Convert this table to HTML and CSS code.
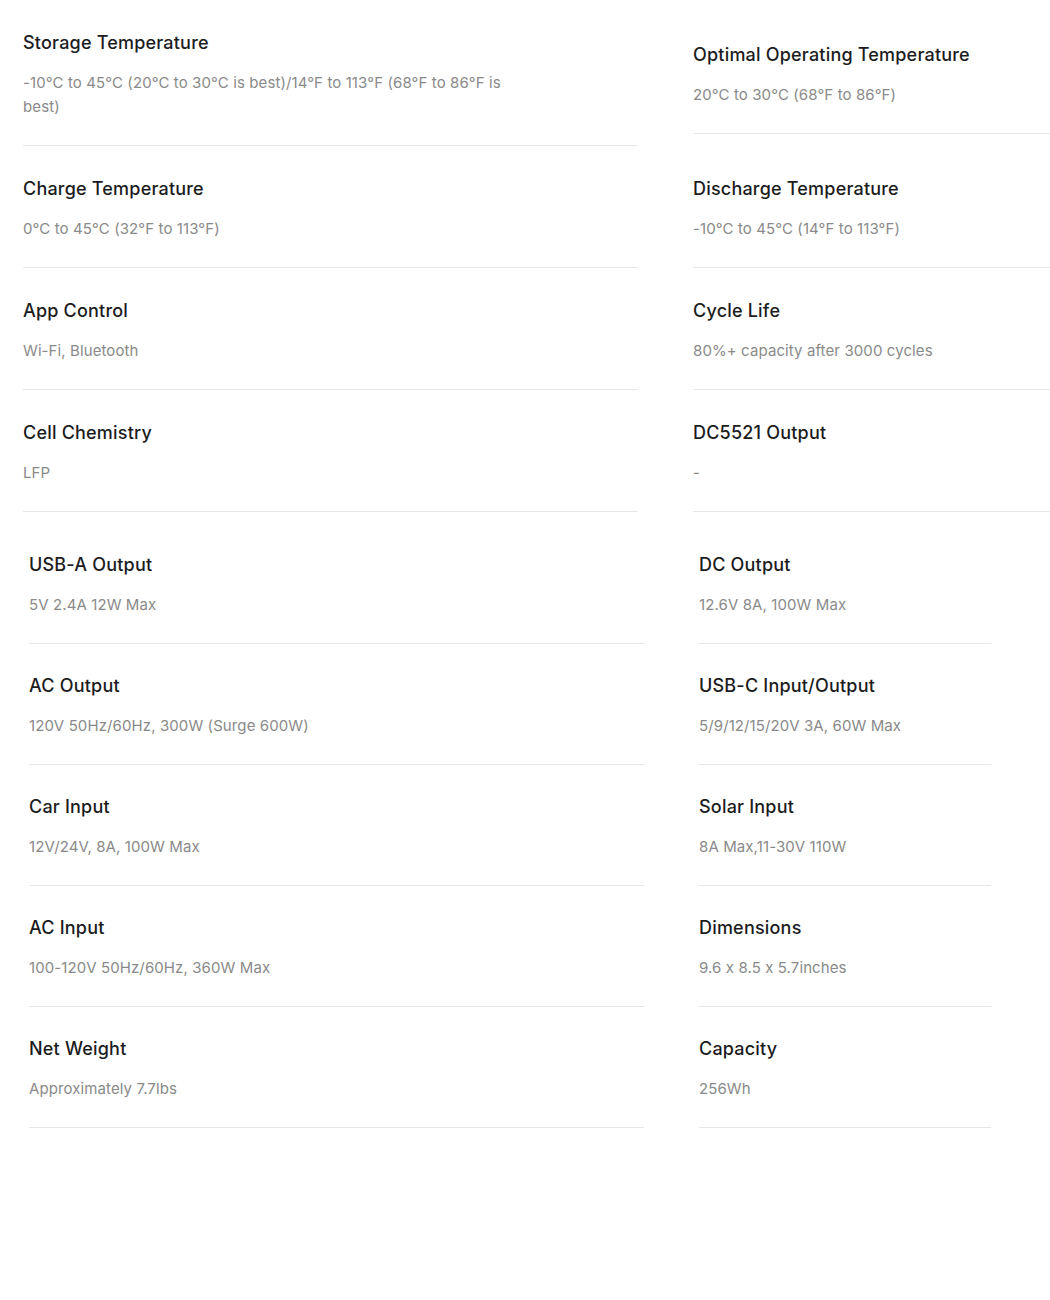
FILE: index.html
```html
<!DOCTYPE html>
<html lang="en">
<head>
<meta charset="utf-8">
<title>Specifications</title>
<link rel="stylesheet" href="styles.css">
</head>
<body>
<div class="page">
  <section class="specs specs-top">
    <div class="spec"><h3 class="spec-title">Storage Temperature</h3><p class="spec-value">-10°C to 45°C (20°C to 30°C is best)/14°F to 113°F (68°F to 86°F is best)</p></div>
    <div class="spec"><h3 class="spec-title">Optimal Operating Temperature</h3><p class="spec-value">20°C to 30°C (68°F to 86°F)</p></div>
    <div class="spec"><h3 class="spec-title">Charge Temperature</h3><p class="spec-value">0°C to 45°C (32°F to 113°F)</p></div>
    <div class="spec"><h3 class="spec-title">Discharge Temperature</h3><p class="spec-value">-10°C to 45°C (14°F to 113°F)</p></div>
    <div class="spec"><h3 class="spec-title">App Control</h3><p class="spec-value">Wi-Fi, Bluetooth</p></div>
    <div class="spec"><h3 class="spec-title">Cycle Life</h3><p class="spec-value">80%+ capacity after 3000 cycles</p></div>
    <div class="spec"><h3 class="spec-title">Cell Chemistry</h3><p class="spec-value">LFP</p></div>
    <div class="spec"><h3 class="spec-title">DC5521 Output</h3><p class="spec-value">-</p></div>
  </section>
  <section class="specs specs-bottom">
    <div class="spec"><h3 class="spec-title">USB-A Output</h3><p class="spec-value">5V 2.4A 12W Max</p></div>
    <div class="spec"><h3 class="spec-title">DC Output</h3><p class="spec-value">12.6V 8A, 100W Max</p></div>
    <div class="spec"><h3 class="spec-title">AC Output</h3><p class="spec-value">120V 50Hz/60Hz, 300W (Surge 600W)</p></div>
    <div class="spec"><h3 class="spec-title">USB-C Input/Output</h3><p class="spec-value">5/9/12/15/20V 3A, 60W Max</p></div>
    <div class="spec"><h3 class="spec-title">Car Input</h3><p class="spec-value">12V/24V, 8A, 100W Max</p></div>
    <div class="spec"><h3 class="spec-title">Solar Input</h3><p class="spec-value">8A Max,11-30V 110W</p></div>
    <div class="spec"><h3 class="spec-title">AC Input</h3><p class="spec-value">100-120V 50Hz/60Hz, 360W Max</p></div>
    <div class="spec"><h3 class="spec-title">Dimensions</h3><p class="spec-value">9.6 x 8.5 x 5.7inches</p></div>
    <div class="spec"><h3 class="spec-title">Net Weight</h3><p class="spec-value">Approximately 7.7lbs</p></div>
    <div class="spec"><h3 class="spec-title">Capacity</h3><p class="spec-value">256Wh</p></div>
  </section>
</div>
</body>
</html>
```

FILE: styles.css
```css
html, body {
  margin: 0;
  padding: 0;
  background: #ffffff;
  overflow: hidden;
}

body {
  font-family: Inter, "Noto Sans", "Liberation Sans", sans-serif;
  width: 1050px;
  height: 1300px;
}

.page {
  padding-top: 30px;
}

.specs {
  display: grid;
  align-items: center;
  column-gap: 55px;
}

.specs-top {
  margin-left: 23px;
  grid-template-columns: 615px 1fr;
  row-gap: 30px;
}

.specs-bottom {
  margin-left: 29px;
  margin-top: 40px;
  grid-template-columns: 615px 292px;
  row-gap: 29px;
}

.spec {
  border-bottom: 1px solid #e6e6e6;
  padding-bottom: 26px;
}

.spec-title {
  margin: 0;
  font-size: 18px;
  line-height: 26px;
  font-weight: 500;
  color: #1c1c1e;
  letter-spacing: 0.2px;
}

.spec-value {
  margin: 15px 0 0;
  font-size: 15px;
  line-height: 24px;
  font-weight: 400;
  color: #8a8a8a;
  max-width: 510px;
  letter-spacing: 0.1px;
}
```
